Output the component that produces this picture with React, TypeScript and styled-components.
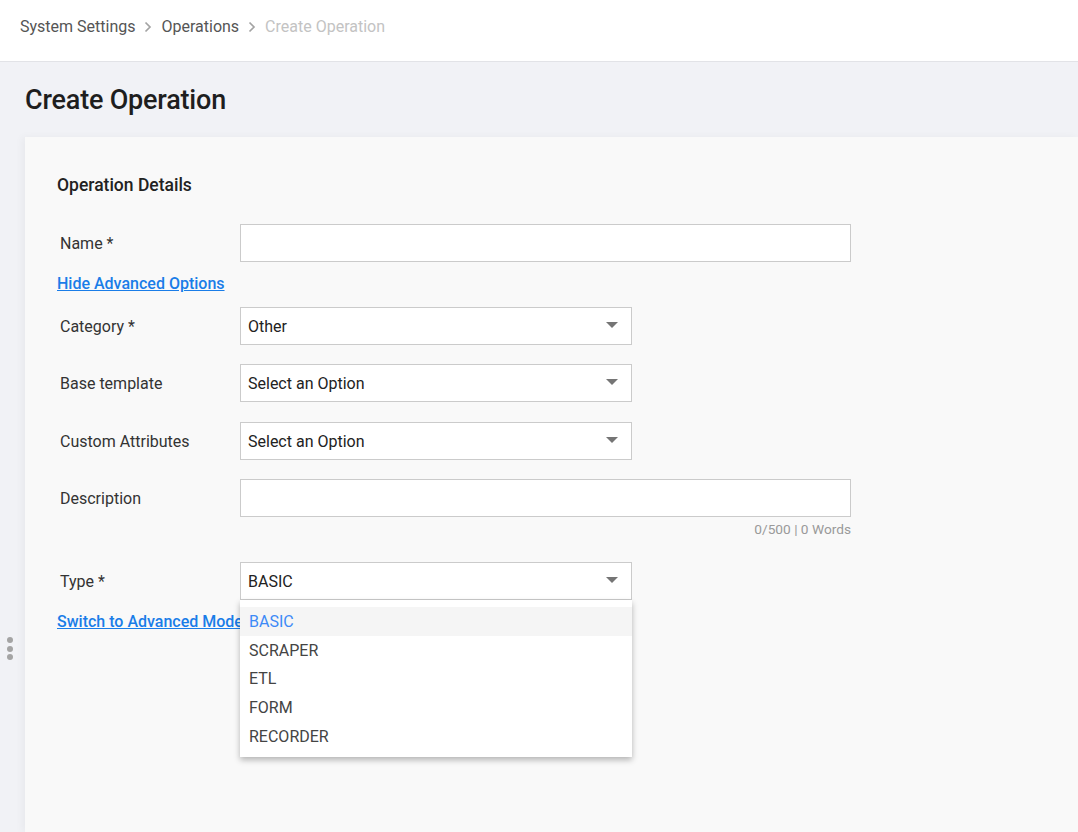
import React from "react";
import styled, { createGlobalStyle } from "styled-components";

const GlobalStyle = createGlobalStyle`
  html, body {
    margin: 0;
    padding: 0;
    background: #f1f2f6;
    font-family: Roboto, "Liberation Sans", Arial, sans-serif;
    color: #333;
  }
  * {
    box-sizing: border-box;
  }
`;

const Page = styled.div`
  min-height: 832px;
  display: flex;
  flex-direction: column;
  overflow: hidden;
`;

const Header = styled.header`
  height: 62px;
  background: #fff;
  border-bottom: 1px solid #e2e3e7;
  display: flex;
  align-items: center;
  padding: 0 0 8px 20px;
`;

const Crumbs = styled.nav`
  display: flex;
  align-items: center;
  gap: 9px;
  font-size: 16px;
`;

const Crumb = styled.span<{ $current?: boolean }>`
  color: ${(p) => (p.$current ? "#c3c3c3" : "#555")};
`;

const Chevron = () => (
  <svg width="8" height="12" viewBox="0 0 8 12">
    <path d="M1.5 1.5 L6 6 L1.5 10.5" fill="none" stroke="#a3a3a3" strokeWidth="1.7" />
  </svg>
);

const Title = styled.h1`
  margin: 0;
  padding: 22px 0 21px 25px;
  font-size: 27px;
  line-height: 32px;
  font-weight: 500;
  color: #1e1e1e;
  letter-spacing: -0.2px;
`;

const Body = styled.div`
  flex: 1;
  display: flex;
  position: relative;
`;

const Grip = styled.div`
  position: absolute;
  left: 7px;
  top: 500px;
  display: flex;
  flex-direction: column;
  gap: 2.5px;
`;

const Dot = styled.span`
  width: 6px;
  height: 6px;
  border-radius: 50%;
  background: #a4a4a4;
`;

const Card = styled.section`
  flex: 1;
  margin-left: 25px;
  min-height: 695px;
  background: #f9f9f9;
  box-shadow: -3px 0 8px rgba(0, 0, 0, 0.04);
  padding: 38px 32px 40px 32px;
`;

const SectionTitle = styled.h2`
  margin: 0 0 29px 0;
  font-size: 17.5px;
  line-height: 20px;
  font-weight: 500;
  color: #222;
`;

const Row = styled.div<{ $gap?: number }>`
  display: flex;
  align-items: center;
  margin-top: ${(p) => p.$gap ?? 0}px;
`;

const Label = styled.label`
  width: 183px;
  padding-left: 3px;
  font-size: 16px;
  color: #333;
`;

const Field = styled.div<{ $wide?: boolean }>`
  position: relative;
  width: ${(p) => (p.$wide ? 611 : 392)}px;
`;

const TextBox = styled.div`
  height: 38px;
  background: #fff;
  border: 1px solid #cbcbcb;
`;

const SelectBox = styled.div`
  height: 38px;
  background: #fff;
  border: 1px solid #cbcbcb;
  display: flex;
  align-items: center;
  justify-content: space-between;
  padding: 0 13px 0 7px;
  font-size: 16px;
  color: #222;
`;

const Caret = styled.span`
  width: 0;
  height: 0;
  border-left: 6px solid transparent;
  border-right: 6px solid transparent;
  border-top: 6px solid #757575;
  margin-top: -2px;
`;

const Link = styled.a<{ $gap?: number }>`
  display: inline-block;
  margin-top: ${(p) => p.$gap ?? 0}px;
  font-size: 16px;
  line-height: 20px;
  font-weight: 500;
  color: #1a7de8;
  text-decoration: underline;
  cursor: pointer;
`;

const Counter = styled.div`
  width: 794px;
  text-align: right;
  margin-top: 4px;
  font-size: 13.7px;
  line-height: 16px;
  color: #9a9a9a;
`;

const Menu = styled.ul`
  position: absolute;
  top: 100%;
  left: 0;
  right: 0;
  margin: 0;
  padding: 7px 0 7px;
  list-style: none;
  background: #fff;
  box-shadow: 0 3px 6px rgba(0, 0, 0, 0.28);
  z-index: 5;
`;

const MenuItem = styled.li<{ $active?: boolean }>`
  height: 28.7px;
  display: flex;
  align-items: center;
  padding-left: 9px;
  font-size: 16px;
  color: ${(p) => (p.$active ? "#3d8af7" : "#444")};
  background: ${(p) => (p.$active ? "#f5f5f5" : "transparent")};
`;

const types = ["BASIC", "SCRAPER", "ETL", "FORM", "RECORDER"];

export default function App() {
  return (
    <Page>
      <GlobalStyle />
      <Header>
        <Crumbs>
          <Crumb>System Settings</Crumb>
          <Chevron />
          <Crumb>Operations</Crumb>
          <Chevron />
          <Crumb $current>Create Operation</Crumb>
        </Crumbs>
      </Header>
      <Title>Create Operation</Title>
      <Body>
        <Grip>
          <Dot />
          <Dot />
          <Dot />
        </Grip>
        <Card>
          <SectionTitle>Operation Details</SectionTitle>
          <Row>
            <Label>Name *</Label>
            <Field $wide>
              <TextBox />
            </Field>
          </Row>
          <Link $gap={12}>Hide Advanced Options</Link>
          <Row $gap={13}>
            <Label>Category *</Label>
            <Field>
              <SelectBox>
                Other
                <Caret />
              </SelectBox>
            </Field>
          </Row>
          <Row $gap={19}>
            <Label>Base template</Label>
            <Field>
              <SelectBox>
                Select an Option
                <Caret />
              </SelectBox>
            </Field>
          </Row>
          <Row $gap={20}>
            <Label>Custom Attributes</Label>
            <Field>
              <SelectBox>
                Select an Option
                <Caret />
              </SelectBox>
            </Field>
          </Row>
          <Row $gap={19}>
            <Label>Description</Label>
            <Field $wide>
              <TextBox />
            </Field>
          </Row>
          <Counter>0/500 | 0 Words</Counter>
          <Row $gap={25}>
            <Label>Type *</Label>
            <Field>
              <SelectBox>
                BASIC
                <Caret />
              </SelectBox>
              <Menu>
                {types.map((t, i) => (
                  <MenuItem key={t} $active={i === 0}>
                    {t}
                  </MenuItem>
                ))}
              </Menu>
            </Field>
          </Row>
          <Link $gap={12}>Switch to Advanced Mode</Link>
        </Card>
      </Body>
    </Page>
  );
}
